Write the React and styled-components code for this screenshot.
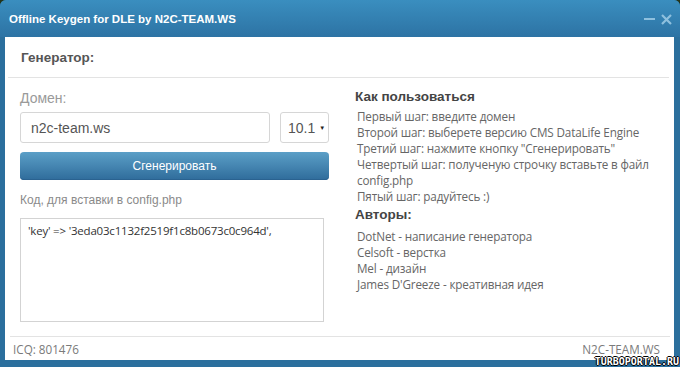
import React from "react";
import styled, { createGlobalStyle } from "styled-components";

const GlobalStyle = createGlobalStyle`
  html, body {
    margin: 0;
    padding: 0;
    background: #24351a;
    overflow: hidden;
  }
`;

const Window = styled.div`
  position: relative;
  width: 680px;
  height: 367px;
  display: flex;
  flex-direction: column;
  background: #2b6f9d;
  border-radius: 6px 6px 0 0;
  overflow: hidden;
  box-sizing: border-box;
`;

const TitleBar = styled.div`
  height: 37px;
  flex-shrink: 0;
  display: flex;
  align-items: center;
  justify-content: space-between;
  padding: 0 9px;
  background: linear-gradient(#3a8ebf, #2d73a4);
  color: #fff;
  font-family: "Liberation Sans", Arial, sans-serif;
  font-weight: bold;
  font-size: 11.5px;
`;

const Controls = styled.div`
  display: flex;
  align-items: center;
  gap: 6px;
  margin-right: -1px;
  padding-top: 1px;
`;

const Body = styled.div`
  flex: 1;
  margin: 0 6px 7px 5px;
  background: #fff;
  display: flex;
  flex-direction: column;
  font-family: "Liberation Sans", Arial, sans-serif;
`;

const Section = styled.div`
  height: 40px;
  margin: 0 5px 0 3px;
  padding-left: 13px;
  display: flex;
  align-items: center;
  border-bottom: 1px solid #e3e3e3;
  font-weight: bold;
  font-size: 13.5px;
  color: #555;
`;

const Columns = styled.div`
  flex: 1;
  display: grid;
  grid-template-columns: 309px 1fr;
  column-gap: 26px;
  padding: 0 15px;
`;

const Left = styled.div`
  display: flex;
  flex-direction: column;
`;

const Label = styled.div`
  font-size: 14px;
  color: #9a9a9a;
  margin-top: 12px;
  line-height: 16px;
`;

const InputRow = styled.div`
  display: flex;
  justify-content: space-between;
  margin-top: 6px;
`;

const Field = styled.div`
  box-sizing: border-box;
  width: ${(p) => p.$w}px;
  height: 31px;
  border: 1px solid #d6d6d6;
  border-radius: 3px;
  display: flex;
  align-items: center;
  padding-left: ${(p) => p.$pad}px;
  font-size: 14px;
  color: #555;
`;

const Caret = styled.span`
  font-size: 6px;
  margin-left: 4px;
  color: #222;
`;

const Button = styled.div`
  margin-top: 9px;
  height: 28px;
  border-radius: 4px;
  background: linear-gradient(#5b9fc7, #2f6c9b);
  color: #fff;
  font-size: 12px;
  display: flex;
  align-items: center;
  justify-content: center;
  box-shadow: inset 0 -1px 0 #2a6290;
`;

const Hint = styled.div`
  margin-top: 13px;
  font-size: 12px;
  color: #8a8a8a;
  line-height: 14px;
`;

const CodeBox = styled.div`
  box-sizing: border-box;
  margin-top: 11px;
  width: 304px;
  height: 104px;
  border: 1px solid #d3d3d3;
  padding: 4px 7px;
  font-family: "Open Sans", sans-serif;
  font-size: 11.5px;
  letter-spacing: -0.2px;
  color: #333;
`;

const Right = styled.div`
  padding-top: 10px;
  font-family: "Open Sans", sans-serif;
`;

const Heading = styled.div`
  font-family: "Liberation Sans", Arial, sans-serif;
  font-weight: bold;
  font-size: 13.5px;
  color: #444;
  line-height: 18px;
  margin-top: ${(p) => p.$top || 0}px;
`;

const List = styled.div`
  padding-left: 2px;
  margin-top: ${(p) => p.$top || 0}px;
  font-size: 11.7px;
  letter-spacing: -0.15px;
  color: #666;
  line-height: 16px;
`;

const Step = styled.div`
  width: 292px;
`;

const Footer = styled.div`
  height: 23px;
  margin: 0 4px 0 5px;
  padding: 0 10px 0 3px;
  border-top: 1px solid #e3e3e3;
  display: flex;
  align-items: center;
  justify-content: space-between;
  font-family: "Open Sans", sans-serif;
  font-size: 11.7px;
  color: #7a7a7a;
`;

const Watermark = styled.div`
  position: absolute;
  right: 1px;
  bottom: 0;
  font-family: "DejaVu Sans Mono", monospace;
  font-weight: bold;
  font-size: 10px;
  line-height: 10px;
  color: #fff;
  text-shadow: 1px 0 0 #000, -1px 0 0 #000, 0 1px 0 #000, 0 -1px 0 #000;
`;

const steps = [
  "Первый шаг: введите домен",
  "Второй шаг: выберете версию CMS DataLife Engine",
  'Третий шаг: нажмите кнопку "Сгенерировать"',
  "Четвертый шаг: полученую строчку вставьте в файл config.php",
  "Пятый шаг: радуйтесь :)",
];

const authors = [
  "DotNet - написание генератора",
  "Celsoft - верстка",
  "Mel - дизайн",
  "James D'Greeze - креативная идея",
];

export default function App() {
  return (
    <>
      <GlobalStyle />
      <Window>
        <TitleBar>
          <span>Offline Keygen for DLE by N2C-TEAM.WS</span>
          <Controls>
            <svg width="11" height="11" viewBox="0 0 11 11">
              <rect x="0" y="4" width="11" height="2" fill="#8ec0de" />
            </svg>
            <svg width="11" height="11" viewBox="0 0 11 11">
              <path d="M1 1 L10 10 M10 1 L1 10" stroke="#8ec0de" strokeWidth="2.2" />
            </svg>
          </Controls>
        </TitleBar>
        <Body>
          <Section>Генератор:</Section>
          <Columns>
            <Left>
              <Label>Домен:</Label>
              <InputRow>
                <Field $w={250} $pad={10}>n2c-team.ws</Field>
                <Field $w={49} $pad={7}>
                  10.1<Caret>▼</Caret>
                </Field>
              </InputRow>
              <Button>Сгенерировать</Button>
              <Hint>Код, для вставки в config.php</Hint>
              <CodeBox>'key' =&gt; '3eda03c1132f2519f1c8b0673c0c964d',</CodeBox>
            </Left>
            <Right>
              <Heading>Как пользоваться</Heading>
              <List $top={2}>
                {steps.map((s) => (
                  <Step key={s}>{s}</Step>
                ))}
              </List>
              <Heading $top={2}>Авторы:</Heading>
              <List $top={4}>
                {authors.map((a) => (
                  <div key={a}>{a}</div>
                ))}
              </List>
            </Right>
          </Columns>
          <Footer>
            <span>ICQ: 801476</span>
            <span>N2C-TEAM.WS</span>
          </Footer>
        </Body>
        <Watermark>TURBOPORTAL.RU</Watermark>
      </Window>
    </>
  );
}
